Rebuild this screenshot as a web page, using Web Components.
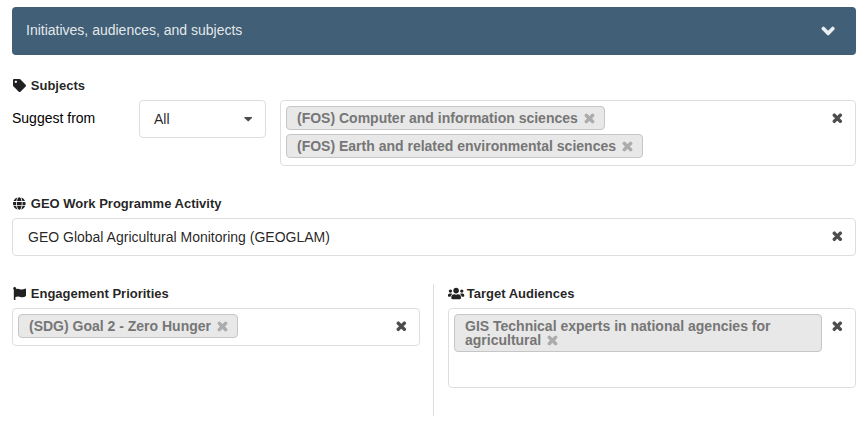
<!DOCTYPE html>
<html lang="en">
<head>
<meta charset="utf-8">
<title>Initiatives, audiences, and subjects</title>
<style>
html,body{margin:0;background:#fff}
body{font-family:"Liberation Sans",Arial,sans-serif;font-size:14px;line-height:18px;color:rgba(0,0,0,.87)}
</style>
</head>
<body>
<metadata-form></metadata-form>
<script>
const ICONS = {
  tag: [512, 'M0 252.118V48C0 21.49 21.49 0 48 0h204.118a48 48 0 0 1 33.941 14.059l211.882 211.882c18.745 18.745 18.745 49.137 0 67.882L293.823 497.941c-18.745 18.745-49.137 18.745-67.882 0L14.059 286.059A48 48 0 0 1 0 252.118zM112 64c-26.51 0-48 21.49-48 48s21.49 48 48 48 48-21.49 48-48-21.49-48-48-48z'],
  times: [352, 'M242.72 256l100.07-100.07c12.28-12.28 12.28-32.19 0-44.48l-22.24-22.24c-12.28-12.28-32.19-12.28-44.48 0L176 189.28 75.93 89.21c-12.28-12.28-32.19-12.28-44.48 0L9.21 111.45c-12.28 12.28-12.28 32.19 0 44.48L109.28 256 9.21 356.07c-12.28 12.28-12.28 32.19 0 44.48l22.24 22.24c12.28 12.28 32.2 12.28 44.48 0L176 322.72l100.07 100.07c12.28 12.28 32.2 12.28 44.48 0l22.24-22.24c12.28-12.28 12.28-32.19 0-44.48L242.72 256z', 42],
  globe: [496, 'M336.5 160C322 70.7 287.8 8 248 8s-74 62.7-88.5 152h177zM152 256c0 22.2 1.2 43.5 3.3 64h185.3c2.1-20.5 3.3-41.8 3.3-64s-1.2-43.5-3.3-64H155.3c-2.1 20.5-3.3 41.8-3.3 64zm324.7-96c-28.6-67.9-86.5-120.4-158-141.6 24.4 33.8 41.2 84.7 50 141.6h108zM177.2 18.4C105.8 39.6 47.8 92.1 19.3 160h108c8.7-56.9 25.5-107.8 49.9-141.6zM487.4 192H372.7c2.1 21 3.3 42.5 3.3 64s-1.2 43-3.3 64h114.6c5.5-20.5 8.6-41.8 8.6-64s-3.1-43.5-8.5-64zM120 256c0-21.5 1.2-43 3.3-64H8.6C3.2 212.5 0 233.8 0 256s3.2 43.5 8.6 64h114.6c-2-21-3.2-42.5-3.2-64zm39.5 96c14.5 89.3 48.7 152 88.5 152s74-62.7 88.5-152h-177zm159.3 141.6c71.4-21.2 129.4-73.7 158-141.6h-108c-8.8 56.9-25.6 107.8-50 141.6zM19.3 352c28.6 67.9 86.5 120.4 158 141.6-24.4-33.8-41.2-84.7-50-141.6h-108z'],
  flag: [512, 'M349.565 98.783C295.978 98.783 251.721 64 184.348 64c-24.955 0-47.309 4.384-68.045 12.013a55.947 55.947 0 0 0 3.586-23.562C118.117 24.015 94.806 1.206 66.338.048 34.345-1.254 8 24.296 8 56c0 19.026 9.497 35.825 24 45.945V488c0 13.255 10.745 24 24 24h16c13.255 0 24-10.745 24-24v-94.4c28.311-12.064 63.582-22.122 114.435-22.122 53.588 0 97.844 34.783 165.217 34.783 48.169 0 86.667-16.294 122.505-40.858C506.84 359.452 512 349.571 512 339.045v-243.1c0-23.393-24.269-38.87-45.485-29.016-34.338 15.948-76.454 31.854-116.95 31.854z'],
  users: [640, 'M96 224c35.3 0 64-28.7 64-64s-28.7-64-64-64-64 28.7-64 64 28.7 64 64 64zm448 0c35.3 0 64-28.7 64-64s-28.7-64-64-64-64 28.7-64 64 28.7 64 64 64zm32 32h-64c-17.6 0-33.5 7.1-45.1 18.6 40.3 22.1 68.9 62 75.1 109.4h66c17.7 0 32-14.3 32-32v-32c0-35.3-28.7-64-64-64zm-256 0c61.9 0 112-50.1 112-112S381.9 32 320 32 208 82.1 208 144s50.1 112 112 112zm76.8 32h-8.3c-20.8 10-43.9 16-68.5 16s-47.6-6-68.5-16h-8.3C179.6 288 128 339.6 128 403.2V432c0 26.5 21.5 48 48 48h288c26.5 0 48-21.5 48-48v-28.8c0-63.6-51.6-115.2-115.2-115.2zm-223.7-13.4C161.5 263.1 145.6 256 128 256H64c-35.3 0-64 28.7-64 64v32c0 17.7 14.3 32 32 32h65.9c6.3-47.4 34.9-87.3 75.2-109.4z'],
  chevron: [448, 'M207.029 381.476L12.686 187.132c-9.373-9.373-9.373-24.569 0-33.941l22.667-22.667c9.357-9.357 24.522-9.375 33.901-.04L224 284.505l154.745-154.021c9.379-9.335 24.544-9.317 33.901.04l22.667 22.667c9.373 9.373 9.373 24.569 0 33.941L240.971 381.476c-9.373 9.372-24.569 9.372-33.942 0z', 52],
  caret: [320, 'M31.3 192h257.3c17.8 0 26.7 21.5 14.1 34.1L174.1 354.8c-7.8 7.8-20.5 7.8-28.3 0L17.2 226.1C4.6 213.5 13.4 192 31.3 192z']
};

function define(name, html) {
  customElements.define(name, class extends HTMLElement {
    constructor() {
      super();
      const t = document.createElement('template');
      t.innerHTML = html;
      this.attachShadow({ mode: 'open' }).append(t.content.cloneNode(true));
    }
  });
}

customElements.define('ui-icon', class extends HTMLElement {
  connectedCallback() {
    if (this.shadowRoot) return;
    const [w, d, stroke = 0] = ICONS[this.getAttribute('name')];
    this.attachShadow({ mode: 'open' }).innerHTML = `
      <style>:host{display:inline-flex;justify-content:center;align-items:center;width:1.18em;height:1em;flex:none}
      svg{display:block;height:1em;width:${w / 512}em;flex:none;fill:currentColor;stroke:currentColor;stroke-width:${stroke};overflow:visible}</style>
      <svg viewBox="0 0 ${w} 512" aria-hidden="true"><path d="${d}"/></svg>`;
  }
});

define('ui-banner', `
  <style>:host{display:flex;align-items:center;justify-content:space-between;height:48px;box-sizing:border-box;padding:0 19px 2px 14px;background:#415f77;color:rgba(255,255,255,.87)}
  :host{border-radius:4px}
  ui-icon{font-size:14px;width:18px;margin-top:2px;color:#eceff1}</style>
  <slot></slot><ui-icon name="chevron"></ui-icon>`);

customElements.define('ui-label', class extends HTMLElement {
  connectedCallback() {
    if (this.shadowRoot) return;
    this.attachShadow({ mode: 'open' }).innerHTML = `
      <style>:host{display:flex;align-items:center;gap:3.4px;height:18px;font-size:13px;font-weight:700;padding-top:1px;margin-bottom:5px;white-space:nowrap}
      ui-icon{font-size:13px;width:15.4px;margin-top:-2px}</style>
      <ui-icon name="${this.getAttribute('icon')}"></ui-icon><slot></slot>`;
  }
});

define('ui-chip', `
  <style>:host{display:block;box-sizing:border-box;border:1px solid #c5c6c7;border-radius:4px;background:#e8e8e8;color:#767676;padding:4px 10px;font-weight:700;line-height:14px;max-width:100%}
  ui-icon{font-size:13px;width:10.35px;height:10px;margin-left:6.05px;vertical-align:-1.5px;color:#acacac}</style>
  <slot></slot><ui-icon name="times"></ui-icon>`);

define('ui-field', `
  <style>:host{display:flex;box-sizing:border-box;border:1px solid #dededf;border-radius:4px;background:#fff;min-height:38px;padding:5px 13px 5px 5px;align-items:flex-start;justify-content:space-between}
  .items{display:flex;flex-direction:column;align-items:flex-start;gap:4px;flex:1;min-width:0}
  ui-icon{font-size:12.5px;width:10px;height:13px;margin-top:6px;margin-left:10px;color:#4c4c4c}</style>
  <div class="items"><slot></slot></div><ui-icon name="times"></ui-icon>`);

define('ui-select', `
  <style>:host{display:flex;box-sizing:border-box;border:1px solid #dededf;border-radius:4px;height:38px;padding:0 11px 0 14px;align-items:center;justify-content:space-between}
  ui-icon{font-size:13.5px;width:12px;margin-top:-1px;color:#4c4c4c}</style>
  <slot></slot><ui-icon name="caret"></ui-icon>`);

define('metadata-form', `
  <style>
  :host{display:block;padding:7px 11px 0 12px}
  .subjects{padding-top:21px}
  .row{display:grid;grid-template-columns:127px 127px 1fr;align-items:start}
  .row ui-field{margin-left:14px;height:66px}
  .suggest{color:#000;padding-top:9px}
  .activity{padding-top:28px}
  .activity span{padding:4px 0 0 10px}
  .pair{display:grid;grid-template-columns:422px 1fr;height:132px;margin-top:28px}
  .left{padding-right:13px;border-right:1px solid #dededf}
  .right{padding-left:14px}
  .right ui-field{height:80px}
  </style>
  <ui-banner>Initiatives, audiences, and subjects</ui-banner>
  <section class="subjects">
    <ui-label icon="tag">Subjects</ui-label>
    <div class="row">
      <span class="suggest">Suggest from</span>
      <ui-select>All</ui-select>
      <ui-field><ui-chip>(FOS) Computer and information sciences</ui-chip><ui-chip>(FOS) Earth and related environmental sciences</ui-chip></ui-field>
    </div>
  </section>
  <section class="activity">
    <ui-label icon="globe">GEO Work Programme Activity</ui-label>
    <ui-field><span>GEO Global Agricultural Monitoring (GEOGLAM)</span></ui-field>
  </section>
  <section class="pair">
    <div class="left">
      <ui-label icon="flag">Engagement Priorities</ui-label>
      <ui-field><ui-chip>(SDG) Goal 2 - Zero Hunger</ui-chip></ui-field>
    </div>
    <div class="right">
      <ui-label icon="users">Target Audiences</ui-label>
      <ui-field><ui-chip>GIS Technical experts in national agencies for agricultural</ui-chip></ui-field>
    </div>
  </section>`);
</script>
</body>
</html>
